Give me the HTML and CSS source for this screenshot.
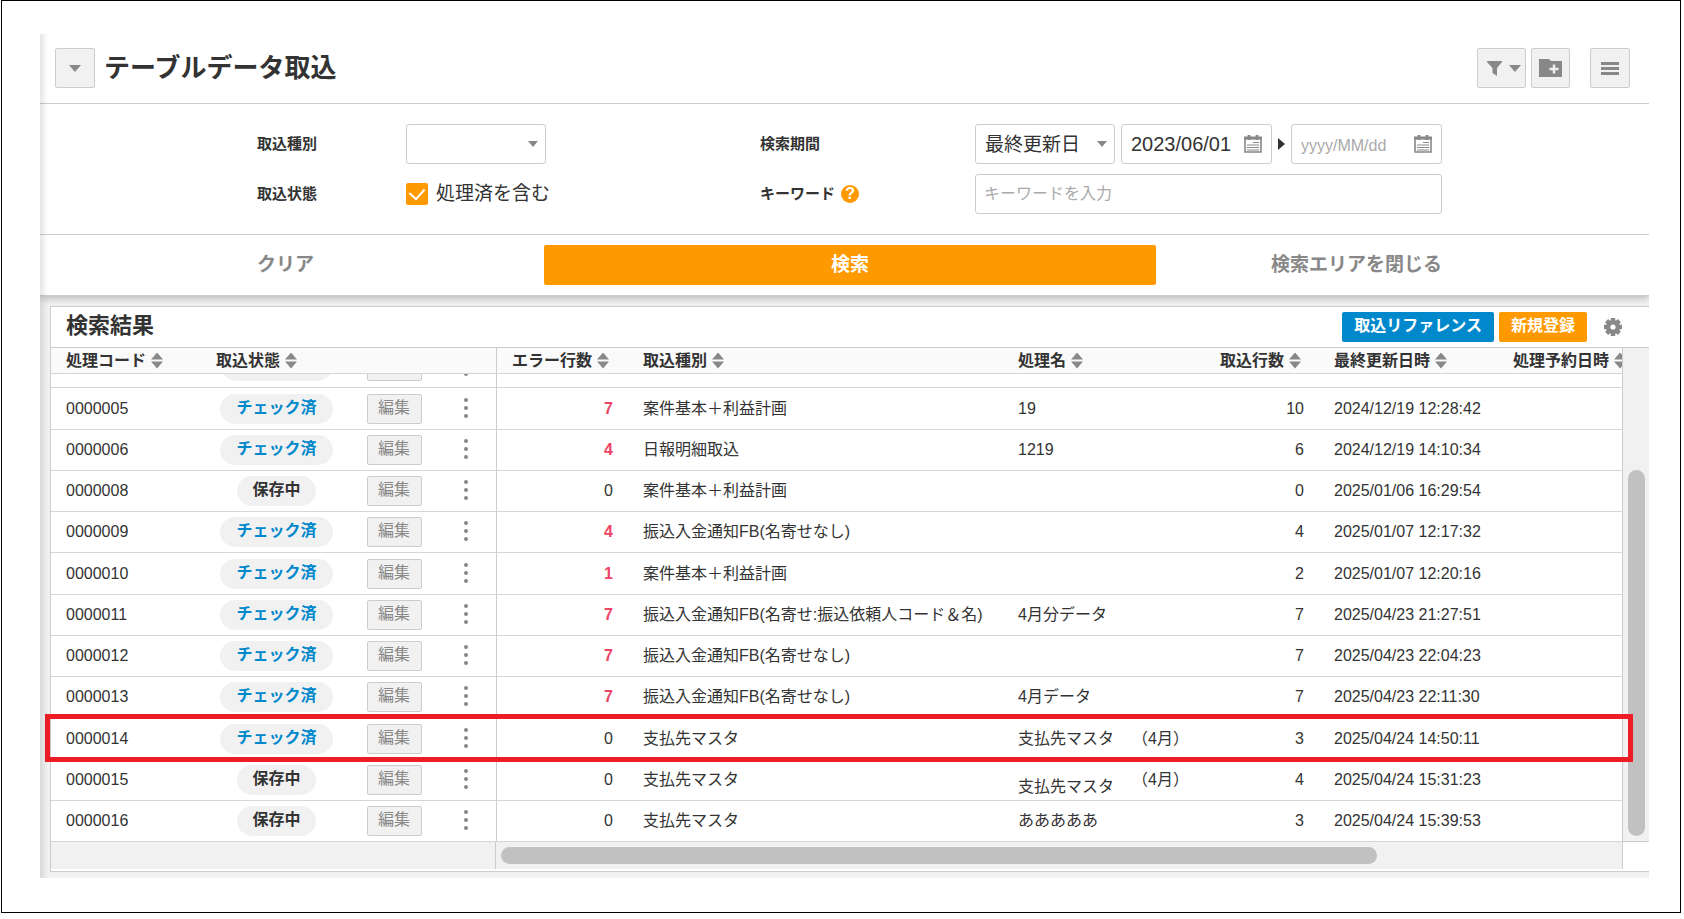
FILE: index.html
```html
<!DOCTYPE html>
<html lang="ja">
<head>
    <meta charset="UTF-8">
    <meta name="viewport" content="width=device-width, initial-scale=1.0">
    <title>テーブルデータ取込</title>
    <link rel="stylesheet" href="styles.css">
</head>
<body>

<div class="frame">
<div class="app">
    <header class="page-header">
        <button type="button" class="icon-btn" aria-label="メニュー切替"><span class="caret"></span></button>
        <h1>テーブルデータ取込</h1>
        <div class="header-tools">
            <button type="button" class="icon-btn filter-btn" aria-label="フィルター">
                <svg width="15" height="15" viewBox="0 0 15 15"><path d="M0 0h15v1L10 7v8L5.500 12V7L0 1z" fill="#888"/></svg>
                <span class="caret"></span>
            </button>
            <button type="button" class="icon-btn folder-btn" aria-label="フォルダ追加">
                <svg width="23" height="18" viewBox="0 0 23 18"><path d="M0 0h10l2 2h11v16H0z" fill="#888"/><path d="M15 5.500v9M10.500 10h9" stroke="#f1f1f1" stroke-width="2.400"/></svg>
            </button>
            <button type="button" class="icon-btn list-btn" aria-label="メニュー">
                <svg width="18" height="13" viewBox="0 0 18 13"><path d="M0 1.500h18M0 6.500h18M0 11.500h18" stroke="#888" stroke-width="3"/></svg>
            </button>
        </div>
    </header>

    <form class="search" onsubmit="return false">
        <div class="search-fields">
            <label class="field-label" for="importType">取込種別</label>
            <div class="select-box">
                <select id="importType"><option></option></select>
                <span class="caret"></span>
            </div>
            <label class="field-label" for="periodType">検索期間</label>
            <div class="period">
                <div class="select-box">
                    <select id="periodType"><option>最終更新日</option></select>
                    <span class="caret"></span>
                </div>
                <div class="date-box">
                    <input type="text" value="2023/06/01" aria-label="開始日">
                    <svg width="18" height="18" viewBox="0 0 18 18"><path d="M1 3.500h16V17H1z" fill="#fff" stroke="#888" stroke-width="1.600"/><path d="M0 3h18M5 0v5M13 0v5" stroke="#888" stroke-width="2.800"/><path d="M9 7.500h6M3 10h12M3 12.500h12M3 15h12" stroke="#888"/></svg>
                </div>
                <span class="period-arrow"></span>
                <div class="date-box">
                    <input type="text" placeholder="yyyy/MM/dd" aria-label="終了日">
                    <svg width="18" height="18" viewBox="0 0 18 18"><path d="M1 3.500h16V17H1z" fill="#fff" stroke="#888" stroke-width="1.600"/><path d="M0 3h18M5 0v5M13 0v5" stroke="#888" stroke-width="2.800"/><path d="M9 7.500h6M3 10h12M3 12.500h12M3 15h12" stroke="#888"/></svg>
                </div>
            </div>
            <span class="field-label">取込状態</span>
            <label class="check"><input type="checkbox" checked>処理済を含む</label>
            <label class="field-label" for="keyword">キーワード<span class="help">?</span></label>
            <input type="text" id="keyword" class="keyword" placeholder="キーワードを入力">
        </div>
        <div class="search-actions">
            <button type="reset" class="text-btn">クリア</button>
            <button type="submit" class="search-btn">検索</button>
            <button type="button" class="text-btn">検索エリアを閉じる</button>
        </div>
    </form>

    <section class="results">
        <div class="results-head">
            <h2>検索結果</h2>
            <button type="button" class="small-btn blue">取込リファレンス</button>
            <button type="button" class="small-btn orange">新規登録</button>
            <button type="button" class="gear-btn" aria-label="設定">
                <svg width="18" height="18" viewBox="-9 -9 18 18"><g fill="#888"><circle r="7"/><path d="M-2.200-9h4.400v18h-4.400zM-9-2.200H9v4.400H-9z"/><path d="M-2.200-9h4.400v18h-4.400zM-9-2.200H9v4.400H-9z" transform="rotate(45)"/></g><circle r="2.600" fill="#fff"/></svg>
            </button>
        </div>
        <div class="grid">
            <div class="grid-body">
                <table>
                    <colgroup>
                        <col class="c-code"><col class="c-status"><col class="c-edit"><col class="c-menu">
                        <col class="c-error"><col class="c-type"><col class="c-name"><col class="c-count"><col class="c-updated"><col>
                    </colgroup>
                    <thead>
                        <tr>
                            <th>処理コード<span class="sort"></span></th>
                            <th>取込状態<span class="sort"></span></th>
                            <th></th>
                            <th class="fixed-end"></th>
                            <th>エラー行数<span class="sort"></span></th>
                            <th>取込種別<span class="sort"></span></th>
                            <th>処理名<span class="sort"></span></th>
                            <th>取込行数<span class="sort"></span></th>
                            <th>最終更新日時<span class="sort"></span></th>
                            <th>処理予約日時<span class="sort"></span></th>
                        </tr>
                    </thead>
                    <tbody id="rows">
                        <!-- スクロールで隠れている行 -->
                        <tr class="peek">
                            <td></td>
                            <td><div class="clip"><span class="badge wide"></span></div></td>
                            <td><div class="clip"><span class="edit-btn"></span></div></td>
                            <td class="fixed-end"><div class="clip"><span class="dot"></span></div></td>
                            <td></td><td></td><td></td><td></td><td></td><td></td>
                        </tr>
                    </tbody>
                </table>
            </div>
            <div class="v-track"><div class="v-thumb"></div></div>
            <div class="highlight"></div>
        </div>
        <div class="h-bar">
            <div class="h-fixed"></div>
            <div class="h-track"><div class="h-thumb"></div></div>
        </div>
    </section>
</div>
</div>

<script src="script.js"></script>
</body>
</html>
```

FILE: styles.css
```css
* {
    box-sizing: border-box;
}

body {
    margin: 0;
    background: #fff;
    color: #333;
    font-family: "Liberation Sans", "Noto Sans CJK JP", sans-serif;
    font-size: 16px;
    line-height: 20px;
}

button, input, select {
    font-family: inherit;
    color: inherit;
    margin: 0;
}

button {
    cursor: pointer;
}

.frame {
    margin: 0 3px 0 1px;
    padding: 33px 31px 34px 38px;
    border: 1px solid #000;
}

.app {
    position: relative;
    padding-bottom: 6px;
    background: #f1f1f1;
}

.app::before {
    content: "";
    position: absolute;
    top: 0;
    bottom: 0;
    left: 0;
    width: 8px;
    background: linear-gradient(to right, rgba(0, 0, 0, 0.1), rgba(0, 0, 0, 0));
    z-index: 2;
}

/* ヘッダー */
.page-header {
    display: flex;
    align-items: center;
    height: 70px;
    padding: 0 19px 1px 15px;
    background: #fff;
    border-bottom: 1px solid #ccc;
}

.page-header h1 {
    margin: 0 0 0 9px;
    font-size: 26px;
    line-height: 40px;
}

.header-tools {
    display: flex;
    margin-left: auto;
}

.icon-btn {
    display: flex;
    align-items: center;
    justify-content: center;
    width: 40px;
    height: 40px;
    padding: 0;
    background: #f1f1f1;
    border: 1px solid #ccc;
    border-radius: 2px;
}

.filter-btn {
    width: 49px;
    gap: 7px;
    margin-right: 5px;
    padding-left: 4px;
}

.folder-btn {
    width: 39px;
}

.list-btn {
    margin-left: 20px;
}

.caret {
    border: 6px solid transparent;
    border-top: 7px solid #888;
    border-bottom: 0;
}

/* 検索エリア */
.search {
    position: relative;
    background: #fff;
    border-bottom: 1px solid #ccc;
    box-shadow: 0 2px 8px rgba(0, 0, 0, 0.25);
    clip-path: inset(0 0 -12px 0);
}

.search-fields {
    display: grid;
    grid-template-columns: 149fr 354fr 215fr 467fr;
    grid-auto-rows: 40px;
    row-gap: 10px;
    align-items: center;
    padding: 20px 207px 20px 217px;
    border-bottom: 1px solid #ccc;
}

.field-label {
    display: flex;
    align-items: center;
    font-size: 15px;
    font-weight: bold;
}

.help {
    width: 18px;
    height: 18px;
    margin-left: 6px;
    border-radius: 50%;
    background: #ff9900;
    color: #fff;
    font-size: 16px;
    line-height: 18px;
    text-align: center;
}

.select-box {
    position: relative;
    width: 140px;
    height: 40px;
}

.select-box select {
    appearance: none;
    width: 100%;
    height: 40px;
    padding: 0 9px;
    background: #fff;
    border: 1px solid #ccc;
    border-radius: 3px;
    font-size: 19px;
}

.select-box .caret {
    position: absolute;
    top: 17px;
    right: 8px;
    border-width: 6px 5px 0;
    pointer-events: none;
}

.period {
    display: flex;
    align-items: center;
    justify-content: space-between;
}

.date-box {
    display: flex;
    align-items: center;
    width: 151px;
    height: 40px;
    padding: 0 9px;
    border: 1px solid #ccc;
    border-radius: 3px;
}

.date-box input {
    flex: 1;
    min-width: 0;
    height: 30px;
    padding: 0;
    border: 0;
    outline: 0;
    background: none;
    font-size: 20px;
}

.date-box input::placeholder, .keyword::placeholder {
    color: #aaa;
    font-size: 16px;
}

.period-arrow {
    border: 6px solid transparent;
    border-left: 7px solid #333;
    border-right: 0;
}

.keyword {
    width: 100%;
    height: 40px;
    padding: 0 8px;
    border: 1px solid #ccc;
    border-radius: 3px;
    font-size: 16px;
}

.check {
    display: flex;
    align-items: center;
    font-size: 19px;
}

.check input {
    appearance: none;
    display: flex;
    align-items: center;
    justify-content: center;
    width: 22px;
    height: 22px;
    margin-right: 8px;
    border-radius: 2px;
    background: #ff9900;
}

.check input:checked::after {
    content: "";
    width: 8px;
    height: 12px;
    margin-bottom: 4px;
    border: solid #fff;
    border-width: 0 2px 2px 0;
    transform: rotate(42deg);
}

.search-actions {
    display: grid;
    grid-template-columns: 287fr 612fr 286fr;
    padding: 10px 207px 10px 217px;
}

.text-btn, .search-btn {
    height: 40px;
    padding: 0 0 5px;
    border: 0;
    font-size: 19px;
    font-weight: bold;
}

.text-btn {
    justify-self: start;
    background: none;
    color: #888;
}

.text-btn:last-child {
    justify-self: end;
}

.search-btn {
    background: #ff9900;
    border-radius: 2px;
    color: #fff;
}

/* 検索結果 */
.results {
    margin: 10px 0 0 10px;
    padding-bottom: 2px;
    background: #fff;
    border: 1px solid #ccc;
    border-right: 0;
}

.results-head {
    display: flex;
    align-items: center;
    gap: 5px;
    height: 40px;
    padding: 0 27px 0 15px;
}

.results-head h2 {
    margin: 0 auto 2px 0;
    font-size: 22px;
    line-height: 30px;
}

.small-btn {
    height: 30px;
    padding: 0 12px 2px;
    border: 0;
    border-radius: 2px;
    color: #fff;
    font-size: 16px;
    font-weight: bold;
    line-height: 20px;
}

.blue {
    background: #0088cc;
}

.orange {
    background: #ff9900;
}

.gear-btn {
    display: flex;
    margin-left: 12px;
    padding: 0;
    background: none;
    border: 0;
}

.grid {
    position: relative;
    display: flex;
    border-top: 1px solid #ccc;
}

.grid-body {
    flex: 1;
    min-width: 0;
    overflow: hidden;
    border-right: 1px solid #ccc;
}

table {
    width: 100%;
    table-layout: fixed;
    border-collapse: separate;
    border-spacing: 0;
}

.c-code { width: 150px; }
.c-status { width: 151px; }
.c-edit { width: 84px; }
.c-menu { width: 61px; }
.c-error { width: 131px; }
.c-type { width: 375px; }
.c-name { width: 202px; }
.c-count { width: 114px; }
.c-updated { width: 179px; }

th, td {
    padding: 0 0 0 15px;
    border-bottom: 1px solid #d6d6d6;
    text-align: left;
    white-space: nowrap;
}

th {
    height: 26px;
    overflow: hidden;
    background: #fafafa;
    font-weight: bold;
}

tbody tr {
    height: 41px;
}

tbody tr:nth-child(4n+2) {
    height: 42px;
}

tbody tr.peek {
    height: 14px;
}

.fixed-end {
    border-right: 1px solid #ccc;
}

.sort {
    display: inline-block;
    width: 12px;
    height: 16px;
    margin-left: 5px;
    vertical-align: -3px;
    background: #888;
    clip-path: polygon(50% 0, 100% 44%, 0 44%, 0 56%, 100% 56%, 50% 100%, 0 56%, 0 44%);
}

td:nth-child(2), td:nth-child(3), td:nth-child(4) {
    padding: 0;
    text-align: center;
}

td:nth-child(5), td:nth-child(8) {
    padding: 0 15px 0 0;
    text-align: right;
}

.error {
    color: #ee4466;
    font-weight: bold;
}

.badge {
    display: inline-block;
    padding: 4px 15px 6px;
    border-radius: 15px;
    background: #f1f1f1;
    font-weight: bold;
    vertical-align: middle;
}

.badge.checked {
    padding: 4px 16px 6px;
    color: #0088cc;
}

.badge.wide {
    width: 112px;
    height: 30px;
}

.edit-btn {
    width: 55px;
    height: 30px;
    padding: 0 0 2px;
    background: #f1f1f1;
    border: 1px solid #ccc;
    border-radius: 2px;
    color: #888;
    font-size: 16px;
    line-height: 20px;
    vertical-align: middle;
}

.menu-btn {
    display: inline-flex;
    flex-direction: column;
    gap: 4px;
    padding: 3px 4px 5px;
    background: none;
    border: 0;
    vertical-align: middle;
}

.dot {
    flex: none;
    width: 4px;
    height: 4px;
    border-radius: 50%;
    background: #888;
}

.clip {
    display: flex;
    align-items: flex-end;
    justify-content: center;
    height: 13px;
    padding-bottom: 6px;
    overflow: hidden;
}

.clip .badge, .clip .edit-btn {
    flex: none;
}

.clip .dot {
    margin-bottom: 5px;
}

.name {
    display: flex;
    align-items: center;
    height: 34px;
}

.name-low {
    align-self: flex-end;
}

.note {
    margin-left: 18px;
}

.v-track {
    width: 26px;
    padding: 122px 4px 5px 5px;
    background: #f1f1f1;
    border-bottom: 1px solid #ccc;
}

.v-thumb {
    height: 100%;
    border-radius: 9px;
    background: #c1c1c1;
}

.highlight {
    position: absolute;
    top: 366px;
    left: -6px;
    right: 16px;
    height: 48px;
    border: 5px solid #ee1c24;
    pointer-events: none;
}

.h-bar {
    display: flex;
    height: 27px;
    margin-right: 26px;
    background: #f1f1f1;
    border-right: 1px solid #ccc;
}

.h-fixed {
    width: 445px;
    border-right: 1px solid #ccc;
}

.h-track {
    flex: 1;
    padding: 5px;
}

.h-thumb {
    width: 78.5%;
    height: 17px;
    border-radius: 9px;
    background: #c1c1c1;
}
```

FILE: script.js
```js
const rows = [
    { code: "0000005", checked: true, errors: 7, type: "案件基本＋利益計画", name: "19", count: 10, updated: "2024/12/19 12:28:42" },
    { code: "0000006", checked: true, errors: 4, type: "日報明細取込", name: "1219", count: 6, updated: "2024/12/19 14:10:34" },
    { code: "0000008", checked: false, errors: 0, type: "案件基本＋利益計画", name: "", count: 0, updated: "2025/01/06 16:29:54" },
    { code: "0000009", checked: true, errors: 4, type: "振込入金通知FB(名寄せなし)", name: "", count: 4, updated: "2025/01/07 12:17:32" },
    { code: "0000010", checked: true, errors: 1, type: "案件基本＋利益計画", name: "", count: 2, updated: "2025/01/07 12:20:16" },
    { code: "0000011", checked: true, errors: 7, type: "振込入金通知FB(名寄せ:振込依頼人コード＆名)", name: "4月分データ", count: 7, updated: "2025/04/23 21:27:51" },
    { code: "0000012", checked: true, errors: 7, type: "振込入金通知FB(名寄せなし)", name: "", count: 7, updated: "2025/04/23 22:04:23" },
    { code: "0000013", checked: true, errors: 7, type: "振込入金通知FB(名寄せなし)", name: "4月データ", count: 7, updated: "2025/04/23 22:11:30" },
    { code: "0000014", checked: true, errors: 0, type: "支払先マスタ", name: "支払先マスタ", note: "（4月）", count: 3, updated: "2025/04/24 14:50:11" },
    { code: "0000015", checked: false, errors: 0, type: "支払先マスタ", name: "支払先マスタ", note: "（4月）", low: true, count: 4, updated: "2025/04/24 15:31:23" },
    { code: "0000016", checked: false, errors: 0, type: "支払先マスタ", name: "あああああ", count: 3, updated: "2025/04/24 15:39:53" }
];

const tbody = document.getElementById("rows");

rows.forEach(row => {
    const tr = document.createElement("tr");
    const note = row.note ? `<span class="note">${row.note}</span>` : "";
    tr.innerHTML = `
        <td>${row.code}</td>
        <td><span class="badge ${row.checked ? "checked" : ""}">${row.checked ? "チェック済" : "保存中"}</span></td>
        <td><button type="button" class="edit-btn">編集</button></td>
        <td class="fixed-end"><button type="button" class="menu-btn" aria-label="操作"><span class="dot"></span><span class="dot"></span><span class="dot"></span></button></td>
        <td class="${row.errors > 0 ? "error" : ""}">${row.errors}</td>
        <td>${row.type}</td>
        <td><div class="name"><span class="${row.low ? "name-low" : ""}">${row.name}</span>${note}</div></td>
        <td>${row.count}</td>
        <td>${row.updated}</td>
        <td></td>`;
    tbody.appendChild(tr);
});
```
